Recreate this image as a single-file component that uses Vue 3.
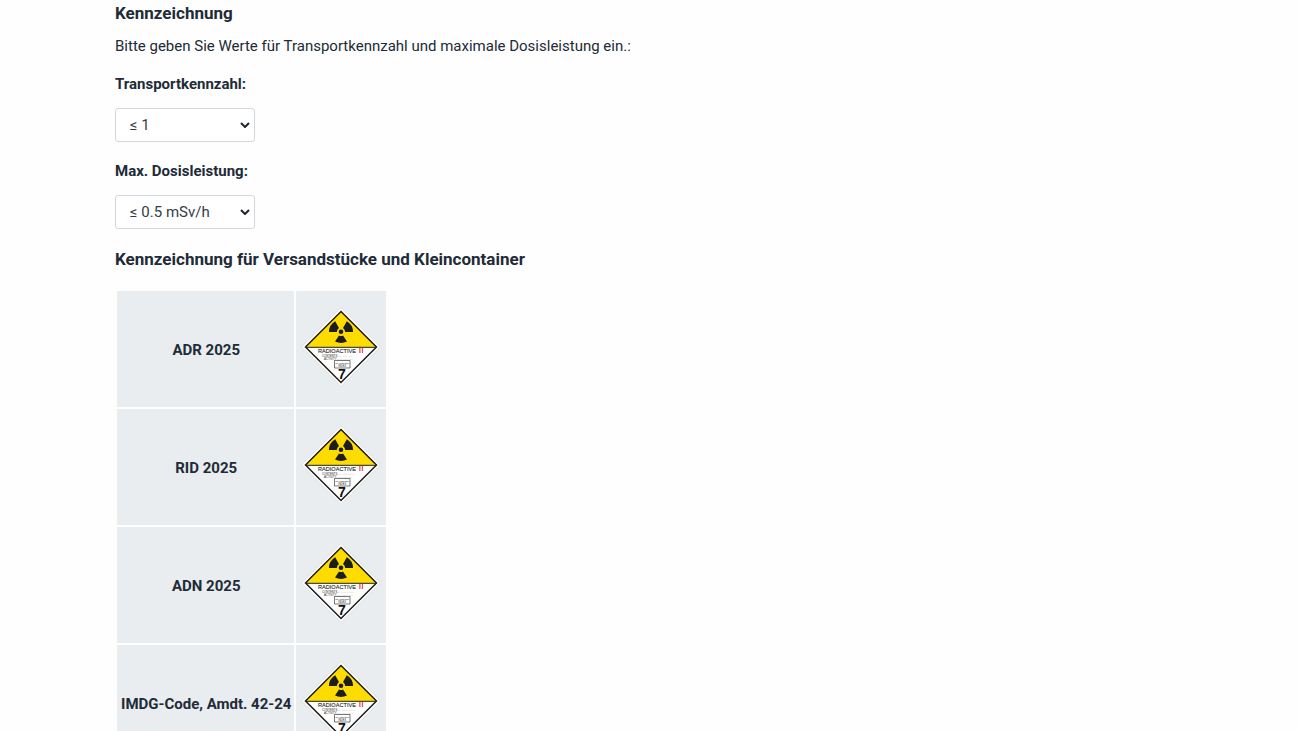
<script setup>
import { ref } from 'vue'

const transportIndex = ref('≤ 1')
const doseRate = ref('≤ 0.5 mSv/h')
const transportOptions = ['0', '≤ 1', '≤ 10', '> 10']
const doseOptions = ['≤ 0.005 mSv/h', '≤ 0.5 mSv/h', '≤ 2 mSv/h', '≤ 10 mSv/h']
const regulations = ['ADR 2025', 'RID 2025', 'ADN 2025', 'IMDG-Code, Amdt. 42-24']
</script>

<template>
  <main class="page">
    <h2 class="title">Kennzeichnung</h2>
    <p class="intro">Bitte geben Sie Werte für Transportkennzahl und maximale Dosisleistung ein.:</p>

    <div class="field">
      <label for="transport">Transportkennzahl:</label>
      <div class="picker">
        <select id="transport" v-model="transportIndex">
          <option v-for="o in transportOptions" :key="o">{{ o }}</option>
        </select>
        <svg class="chevron" viewBox="0 0 10 6" aria-hidden="true"><path d="M1 1l4 4 4-4" /></svg>
      </div>
    </div>

    <div class="field">
      <label for="dose">Max. Dosisleistung:</label>
      <div class="picker">
        <select id="dose" v-model="doseRate">
          <option v-for="o in doseOptions" :key="o">{{ o }}</option>
        </select>
        <svg class="chevron" viewBox="0 0 10 6" aria-hidden="true"><path d="M1 1l4 4 4-4" /></svg>
      </div>
    </div>

    <h2 class="title">Kennzeichnung für Versandstücke und Kleincontainer</h2>

    <table class="labels">
      <tbody>
        <tr v-for="name in regulations" :key="name">
          <th scope="row">{{ name }}</th>
          <td>
            <svg class="placard" viewBox="0 0 80 80" role="img" aria-label="Gefahrzettel 7B">
              <path d="M40 .5L79.500 40L40 79.500L.5 40Z" fill="#fff" stroke="#d5d9dc" stroke-width=".8" stroke-linejoin="round" />
              <path d="M40 4.500L75.500 40H4.500Z" fill="#ffdc00" />
              <path d="M40 4.500L75.500 40L40 75.500L4.500 40Z" fill="none" stroke="#1d1d1b" stroke-width="1.500" />
              <path d="M5 40.300H75" stroke="#1d1d1b" stroke-width="1" />
              <g fill="#1d1d1b" transform="translate(40 24.800)">
                <circle r="2.300" />
                <path d="M-2 3.600L-6 9.800Q0 12.400 6 9.800L2 3.600Q0 4.600-2 3.600Z" />
                <path d="M-2.200 3.600L-6.300 10.300Q0 14 6.300 10.300L2.200 3.600Q0 4.700-2.200 3.600Z" transform="rotate(120)" />
                <path d="M-2.200 3.600L-6.300 10.300Q0 14 6.300 10.300L2.200 3.600Q0 4.700-2.200 3.600Z" transform="rotate(240)" />
              </g>
              <text x="17" y="46" font-size="5.600" fill="#1d1d1b" stroke="#1d1d1b" stroke-width=".1">RADIOACTIVE</text>
              <text x="58" y="46" font-size="6.500" font-weight="700" fill="#d9163c">I</text>
              <text x="60.500" y="46" font-size="6.500" font-weight="700" fill="#d9163c">I</text>
              <text x="21" y="49.500" font-size="2.800" fill="#1d1d1b">CONTENTS</text>
              <text x="23" y="52.700" font-size="2.800" fill="#1d1d1b">ACTIVITY</text>
              <path d="M36 49.300H54M36 52.500H52" stroke="#999" stroke-width=".4" stroke-dasharray=".6 .6" />
              <path d="M33.500 53.500H49V61H33.500Z" fill="#fff" stroke="#1d1d1b" stroke-width=".6" />
              <text x="41.200" y="56.800" font-size="2.300" text-anchor="middle" fill="#1d1d1b">TRANSPORT</text>
              <text x="41.200" y="59.700" font-size="2.600" text-anchor="middle" fill="#1d1d1b">INDEX</text>
              <text x="40.800" y="72" font-size="14" font-weight="700" text-anchor="middle" fill="#111">7</text>
            </svg>
          </td>
        </tr>
      </tbody>
    </table>
  </main>
</template>

<style>
html,
body {
  height: 100%;
  overflow: hidden;
  background: #fefefe;
}
</style>

<style scoped>
.page {
  padding: 0 115px;
  font-family: Roboto, "Noto Sans", sans-serif;
  font-size: 15px;
  line-height: 24px;
  color: #212b37;
}
.title {
  margin: 0;
  font-size: 17px;
  font-weight: 700;
  line-height: 26px;
}
.intro {
  margin: 8px 0 14px;
}
.field {
  margin-bottom: 17px;
}
.field label {
  display: block;
  margin-bottom: 12px;
  font-weight: 700;
}
.picker {
  position: relative;
  width: 140px;
}
select {
  display: block;
  width: 100%;
  height: 34px;
  padding: 0 24px 0 14px;
  border: 1px solid #d3d8dc;
  border-radius: 3px;
  appearance: none;
  background: #fff;
  font: inherit;
  color: #343d47;
}
.chevron {
  position: absolute;
  right: 5px;
  top: 14px;
  width: 10px;
  height: 6px;
  fill: none;
  stroke: #1f252b;
  stroke-width: 2;
  pointer-events: none;
}
.labels {
  margin-top: 17px;
  border-collapse: separate;
  border-spacing: 2px;
}
.labels th,
.labels td {
  background: #e9edf0;
}
.labels th {
  padding: 2px 3px 0 4px;
  text-align: center;
}
.labels td {
  padding: 16px 5px 20px;
}
.placard {
  display: block;
  width: 80px;
  height: 80px;
  font-family: "Liberation Sans", sans-serif;
}
</style>
